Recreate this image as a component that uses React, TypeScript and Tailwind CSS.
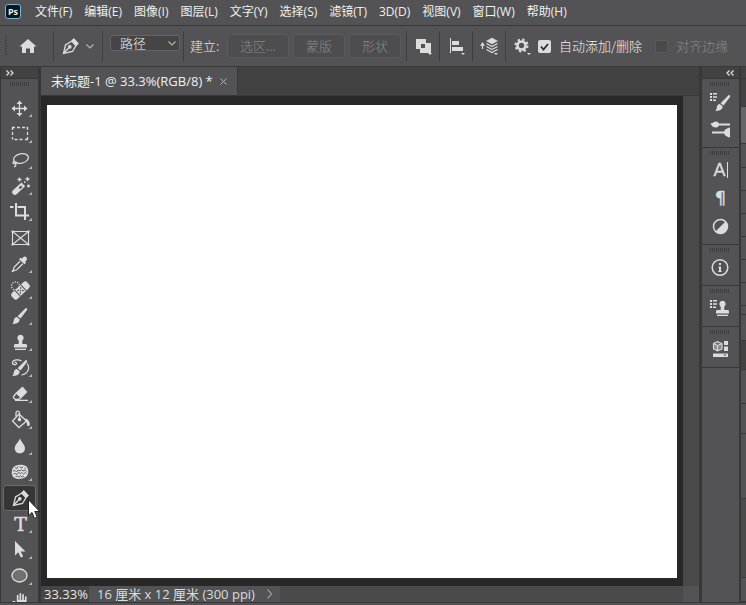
import type { ReactNode } from 'react'

const menus = [
    '文件(F)', '编辑(E)', '图像(I)', '图层(L)', '文字(Y)', '选择(S)',
    '滤镜(T)', '3D(D)', '视图(V)', '窗口(W)', '帮助(H)',
]

const Icon = ({ children }: { children: ReactNode }) => (
    <svg
        viewBox="0 0 24 24"
        className="block size-6 shrink-0"
        fill="none"
        stroke="#dcdcdc"
        strokeWidth="1.3"
        aria-hidden="true"
    >
        {children}
    </svg>
)

const Flyout = () => <path d="M24 18v3h-3.500z" fill="#b4b4b4" stroke="none" />

const BrushShape = () => (
    <g fill="#dcdcdc" stroke="none">
        <path d="M18.600 4.200c.8.500.7 1.200.2 2l-6.200 8.400-3-2.400 7.200-7.300c.7-.7 1.200-1 1.800-.7z" />
        <path d="M8.800 13l2.800 2.300c.2 3.200-3 5-7.600 4.500 1.600-.7 1.500-1.900 1.800-3.500.3-1.900 1.400-3.100 3-3.300z" />
    </g>
)

const StampShape = () => (
    <g fill="#dcdcdc" stroke="none">
        <path d="M12.500 4.800a3.200 3.200 0 0 1 2.200 5.500c-.6.700-.7 2.500-.2 3.700h3c1.100 0 1.500.6 1.500 1.500V17.500H6v-2c0-.9.500-1.500 1.500-1.500h3c.5-1.200.4-3-.2-3.700a3.200 3.200 0 0 1 2.200-5.500z" />
        <path d="M7 18.700h11V20H7z" />
    </g>
)

const PenShape = () => (
    <>
        <path d="M5.500 19.500l2-8.500 6.500-4 4 4.500-3.500 6z" />
        <path d="M14 7l1.800-2 4.200 4.400-2 2z" fill="#dcdcdc" />
        <path d="M5.500 19.500l6-6.500" />
        <circle cx="11.800" cy="12.800" r="1.200" fill="#dcdcdc" />
    </>
)

const ListDots = () => (
    <g fill="#dcdcdc" stroke="none">
        <path d="M2 4h2v2H2zM5 4h4v1.500H5zM2 7h2v2H2zM5 7.300h4v1.400H5zM2 10h2v2H2zM5 10.500h3V12H5z" />
    </g>
)

const tools: { name: string; icon: ReactNode; flyout?: boolean }[] = [
    {
        name: '移动工具',
        icon: (
            <>
                <path d="M11.500 7v11M6 12.500h11" />
                <path d="M11.500 4.500l3 3.500h-6zM11.500 20.500l3-3.500h-6zM3.500 12.500l3.500-3v6zM19.500 12.500l-3.500-3v6z" fill="#dcdcdc" stroke="none" />
            </>
        ),
    },
    {
        name: '矩形选框工具',
        icon: <path d="M4.500 8V5.500H7M9 5.500h3M14 5.500h3M18.500 5.500h1V8M19.500 10v3M19.500 15v2.500H17M14.500 17.500h-3M9.500 17.500h-3M4.500 17.500V15M4.500 13v-3" />,
    },
    {
        name: '套索工具',
        icon: (
            <>
                <ellipse cx="13" cy="10.500" rx="7.500" ry="4.700" transform="rotate(-12 13 10.500)" />
                <path d="M6.500 13.500c-2 .3-2 2.300 0 2.200 2-.1 2.500-1.500 1-2.200M7 15.500c1.500 1 1 2.500-1 3.500" />
            </>
        ),
    },
    {
        name: '魔棒工具',
        icon: (
            <>
                <path d="M13.500 9.500l2.700 2.700-8 7.600c-1 .9-2.400.5-3-.2-.7-.8-.8-1.800.2-2.800z" fill="#dcdcdc" />
                <path d="M13 11.500l1.500 1.500-2.500 2.300-1.300-1.500z" fill="#535355" stroke="none" />
                <path d="M11.500 3.500v4M9.500 5.500h4M19.500 3v4M17.500 5h4M20.500 10.500v3M19 12h3M16 8h1.500" />
            </>
        ),
    },
    {
        name: '裁剪工具',
        icon: <path d="M8 3v12.500h13M2 7h3.500M9.500 7H17v13" strokeWidth="2" />,
    },
    {
        name: '图框工具',
        flyout: false,
        icon: (
            <>
                <path d="M4.500 5.500h16v13h-16zM4.500 5.500l16 13M20.500 5.500l-16 13" strokeWidth="1.100" />
                <path d="M3.500 4.500h2v2h-2zM19.500 4.500h2v2h-2zM3.500 17.500h2v2h-2zM19.500 17.500h2v2h-2z" fill="#dcdcdc" stroke="none" />
            </>
        ),
    },
    {
        name: '吸管工具',
        icon: (
            <>
                <path d="M13.500 6.800c1.500-1.700 3-3 4.500-1.800 1.700 1.300 1 3-.7 4.700l.7 1-1.500 1.600-5.500-5 1.300-1.500z" fill="#dcdcdc" stroke="none" />
                <path d="M12 9.200l-6 6-.5 2.500-1.500 2 2.500-1.200 2.300-.7 6-6" />
            </>
        ),
    },
    {
        name: '污点修复画笔工具',
        icon: (
            <>
                <circle cx="7.500" cy="8" r="4" strokeDasharray="1.200 1.300" />
                <g transform="rotate(-43 12.500 12.500)">
                    <rect x="2" y="8.500" width="21" height="8" rx="2.500" fill="#dcdcdc" stroke="none" />
                    <path d="M8.500 8.500v8M16.500 8.500v8" stroke="#535355" strokeWidth="1" />
                    <path d="M10 10h1.500v1.500H10zM13.500 10H15v1.500h-1.500zM11.800 11.800h1.500v1.500h-1.500zM10 13.500h1.500V15H10zM13.500 13.500H15V15h-1.500z" fill="#535355" stroke="none" />
                </g>
            </>
        ),
    },
    { name: '画笔工具', icon: <BrushShape /> },
    { name: '仿制图章工具', icon: <StampShape /> },
    {
        name: '历史记录画笔工具',
        icon: (
            <>
                <BrushShape />
                <path d="M13.500 5c-3-2-8.500-1.500-9 1.500-.3 2.500 4 3 4 .7 0-1-1.500-1.200-1.800-.3M19 7.500c3.500 4.500 1 10.500-5.500 11.500" strokeWidth="1.200" />
            </>
        ),
    },
    {
        name: '橡皮擦工具',
        icon: (
            <>
                <path d="M14.500 5.500l4 4.500-5.500 5.500-4.500-4.500z" fill="#dcdcdc" />
                <path d="M8.500 11l-3 3.500c-.6.700 1 3 2.500 3h2.500l2.500-2M7 18.300h13" />
            </>
        ),
    },
    {
        name: '油漆桶工具',
        icon: (
            <>
                <path d="M11 6l7.500 7-7.500 6.500-6.500-6.500L11 6z" />
                <path d="M11.500 11V5c0-2.300-3.500-2.500-3.500 0v3.500" />
                <circle cx="11.500" cy="11.500" r="1.200" fill="#dcdcdc" />
                <path d="M16.500 10.500c3 .3 5.500 2.500 5.300 6 0 2-2.800 2-2.800 0 0-2-.8-3-2-4z" fill="#dcdcdc" stroke="none" />
            </>
        ),
    },
    {
        name: '模糊工具',
        icon: <path d="M12 4c.5 3.500 5 6.500 5 10.300 0 3-2.200 5-5.100 5s-5.200-2-5.200-5C6.700 10.500 11.500 7.500 12 4z" fill="#dcdcdc" stroke="none" />,
    },
    {
        name: '海绵工具',
        icon: (
            <>
                <path d="M8 5.500c3-1.200 8-1 10.500 1 2.500 2.300 2.300 8 0 10-2.300 2-7.500 3.300-10.500 2-3.500-1-4.500-4-4.200-6.800C4 8.500 5.500 6.500 8 5.500z" fill="#dcdcdc" stroke="none" />
                <path d="M7 7.500l2 1 1-2M12 6.500l1 1.500 2-1M16.500 8l1.500 1M5 11l2-.5 1.500 1.500 1.500-2 2 1 1.500-1.500 1.500 1.500 2-1 1.500 1.500M5.500 14l2-.5 1.500 1 1.500-2 2 1 1-1 2 1.500 2-1.500 1 1M7.500 16.500l2-.5 1.500 1.500 1.500-2 1.500 1.500 2-1" stroke="#59595b" strokeWidth=".9" />
            </>
        ),
    },
    { name: '钢笔工具', flyout: false, icon: <PenShape /> },
    {
        name: '横排文字工具',
        icon: (
            <text x="12.500" y="19" textAnchor="middle" fill="#dcdcdc" stroke="#dcdcdc" strokeWidth=".5" className="font-['DejaVu_Serif',serif] text-[19px]">
                T
            </text>
        ),
    },
    {
        name: '路径选择工具',
        icon: <path d="M7 3v14.500l3.300-3.200 2.500 5.300 2.400-1.200-2.500-5h4.800z" fill="#dcdcdc" stroke="none" />,
    },
    {
        name: '椭圆工具',
        icon: <ellipse cx="11.500" cy="11.500" rx="7.500" ry="6.500" fill="#707070" />,
    },
    {
        name: '抓手工具',
        flyout: false,
        icon: <path d="M8.800 5.500a.8.800 0 0 1 1.700 0V10h1V3.800a.8.800 0 0 1 1.700 0V10h1V4.800a.8.800 0 0 1 1.700 0V10h1V7a.8.800 0 0 1 1.700 0v8c0 3-2 5-5 5-4 0-6-3-9.100-8.500.6-1.500 2.500-.5 4.300 1.500z" fill="#dcdcdc" stroke="none" />,
    },
]

const panels: { name: string; icon: ReactNode }[][] = [
    [
        {
            name: '画笔设置',
            icon: (
                <>
                    <ListDots />
                    <g transform="translate(3 2)"><BrushShape /></g>
                </>
            ),
        },
        {
            name: '画笔',
            icon: (
                <>
                    <path d="M10 7.500h12M4 15.500h12" strokeWidth="2" />
                    <path d="M2.500 6c2 1 3-1.500 5.500-1.500 2 0 3 1.500 3 3s-1 3-3 3c-3 0-5-2-5.500-4.500zM22 10.500v10c-3.500-.5-6-2.500-6-5s2.500-4.500 6-5z" fill="#dcdcdc" stroke="none" />
                </>
            ),
        },
    ],
    [
        {
            name: '字符',
            icon: (
                <>
                    <text x="11.500" y="18" textAnchor="middle" fill="#dcdcdc" stroke="#dcdcdc" strokeWidth=".3" className="font-['Liberation_Sans',sans-serif] text-[18px]">A</text>
                    <path d="M19.500 4v16" strokeWidth="1" />
                </>
            ),
        },
        {
            name: '段落',
            icon: (
                <text x="12.500" y="18" textAnchor="middle" fill="#dcdcdc" stroke="#dcdcdc" strokeWidth=".3" className="font-['DejaVu_Sans',sans-serif] text-[18px]">¶</text>
            ),
        },
        {
            name: '调整',
            icon: (
                <>
                    <circle cx="12.500" cy="12.500" r="7" strokeWidth="1.500" />
                    <path d="M17.500 7.500a7 7 0 0 1-10 10z" fill="#dcdcdc" stroke="none" />
                </>
            ),
        },
    ],
    [
        {
            name: '信息',
            icon: (
                <>
                    <circle cx="12" cy="12.500" r="7.800" strokeWidth="1.500" />
                    <path d="M11 8h2v2h-2zM10.500 11.500H13v5h-2v-3.800h-.5zM10.300 16h3.400v1h-3.400z" fill="#dcdcdc" stroke="none" />
                </>
            ),
        },
    ],
    [
        {
            name: '仿制源',
            icon: (
                <>
                    <ListDots />
                    <g transform="translate(2)"><StampShape /></g>
                </>
            ),
        },
    ],
    [
        {
            name: '库',
            icon: (
                <>
                    <path d="M5.500 6.500l4-2 4.500 2v5.500l-4.500 2-4-2zM5.500 6.500l4 2 4.500-2M9.500 8.500V14" fill="#8a8a8a" strokeWidth="1.100" />
                    <path d="M16 4h4v4h-4zM16 9.500h4V14h-4zM5 16.500h15V20H5z" fill="#dcdcdc" stroke="none" />
                    <path d="M15.500 17.500h3L17 19z" fill="#444" stroke="none" />
                </>
            ),
        },
    ],
]

// sliver of the next panel column at the right edge
const slices = [
    'h-[28px] bg-[#424242]',
    'h-[37px] bg-[#666668]',
    'h-[24px] bg-[#535355]',
    'h-[23px] bg-[#535355]',
    'h-[23px] bg-[#535355]',
    'h-[23px] bg-[#535355]',
    'h-[23px] bg-[#535355]',
    'h-[23px] bg-[#535355]',
    'h-[23px] bg-[#535355]',
    'h-[9px] bg-[#535355]',
    'h-[26px] bg-[#535355]',
    'h-[29px] bg-[#424242]',
    'h-[34px] bg-[#535355]',
    'h-[30px] bg-[#535355]',
    'h-[65px] bg-[#535355]',
    'h-[79px] bg-[#4a4a4a]',
    'flex-1 bg-[#535355]',
]

const Grip = () => (
    <div className="h-1 w-5 bg-[repeating-linear-gradient(90deg,#3e3e3e_0_1px,transparent_1px_2px)]" />
)

const Divider = () => <div className="h-[30px] w-px shrink-0 bg-[#3e3e3e]" />

const MakeButton = ({ children, className }: { children: ReactNode; className: string }) => (
    <button
        disabled
        className={`h-6 shrink-0 rounded-[3px] border border-[#5b5b5d] bg-[#4d4d4f] text-[#88888a] ${className}`}
    >
        {children}
    </button>
)

const OptionsBar = () => (
    <div className="flex h-[41px] shrink-0 items-center border-b border-[#383838] font-['Noto_Sans_CJK_SC',sans-serif] text-[13px] font-light leading-4 whitespace-nowrap">
        <div className="flex w-[53px] shrink-0 items-center pl-[5px]">
            <div className="h-5 w-0.5 bg-[repeating-linear-gradient(#3e3e3e_0_1px,transparent_1px_2px)]" />
            <button aria-label="主页" className="ml-[9px]">
                <Icon>
                    <path d="M12 5l8.500 7.500H18V19h-4v-4.500h-4V19H6v-6.500H3.500z" fill="#dcdcdc" stroke="none" />
                </Icon>
            </button>
        </div>
        <Divider />
        <button aria-label="钢笔工具预设" className="flex w-12 shrink-0 items-center pl-1">
            <Icon><PenShape /></Icon>
            <svg viewBox="0 0 8 5" className="ml-1 h-[5px] w-2" fill="none" stroke="#b4b4b4" strokeWidth="1.200">
                <path d="M.5.500L4 4 7.500.500" />
            </svg>
        </button>
        <Divider />
        <div className="grid w-20 shrink-0 items-center justify-start pb-1.5 pl-[7px]">
            <select
                aria-label="工具模式"
                defaultValue="path"
                className="col-start-1 row-start-1 h-4 w-[70px] appearance-none rounded-[3px] border border-[#646466] bg-[#454545] pl-[9px] leading-[14px] text-[#f0f0f0]"
            >
                <option value="path">路径</option>
                <option value="shape">形状</option>
            </select>
            <svg viewBox="0 0 8 5" className="pointer-events-none col-start-1 row-start-1 mr-1 h-[5px] w-2 justify-self-end" fill="none" stroke="#b4b4b4" strokeWidth="1.200">
                <path d="M.5.500L4 4 7.500.500" />
            </svg>
        </div>
        <Divider />
        <div className="flex w-[222px] shrink-0 items-center gap-1 pl-1.5">
            <span className="w-[33px] text-[#e6e6e6]">建立:</span>
            <MakeButton className="w-[62px]">选区...</MakeButton>
            <MakeButton className="w-[52px]">蒙版</MakeButton>
            <MakeButton className="w-[52px]">形状</MakeButton>
        </div>
        <Divider />
        <button aria-label="路径操作" className="w-8 shrink-0 pl-1">
            <Icon>
                <path d="M5 5h10v4h5v10H9v-4H5zM10 10v4h4v-4z" fill="#dcdcdc" fillRule="evenodd" stroke="none" />
                <path d="M17 19h4l-2 2z" fill="#dcdcdc" stroke="none" />
            </Icon>
        </button>
        <Divider />
        <button aria-label="路径对齐方式" className="w-8 shrink-0 pl-1">
            <Icon>
                <path d="M6 4h1v15H6zM8 7h7v4H8zM8 13h11v4H8zM17 19h4l-2 2z" fill="#dcdcdc" stroke="none" />
            </Icon>
        </button>
        <Divider />
        <button aria-label="路径排列方式" className="w-8 shrink-0 pl-1">
            <Icon>
                <path d="M5.500 9v6" strokeWidth="1.200" />
                <path d="M3.500 11.500l2-3 2 3zM9.500 7l5.500-3 5.500 3-5.500 3z" fill="#dcdcdc" strokeWidth=".5" />
                <path d="M9.500 9.500l5.500 3 5.500-3M9.500 12.500l5.500 3 5.500-3M9.500 15.500l5.500 3 5.500-3" strokeWidth="1.200" />
                <path d="M17 19h4l-2 2z" fill="#dcdcdc" stroke="none" />
            </Icon>
        </button>
        <Divider />
        <button aria-label="其他钢笔选项" className="ml-1 shrink-0">
            <Icon>
                <circle cx="11.500" cy="11.500" r="4" strokeWidth="2.600" />
                <circle cx="11.500" cy="11.500" r="6" strokeWidth="2" strokeDasharray="2.356 2.356" />
                <path d="M17 19h4l-2 2z" fill="#dcdcdc" stroke="none" />
            </Icon>
        </button>
        <label className="ml-1 flex shrink-0 items-center gap-2 text-[#f0f0f0]">
            <span className="grid place-items-center">
                <input type="checkbox" defaultChecked className="peer col-start-1 row-start-1 size-[13px] appearance-none rounded-[2px] bg-[#777] checked:bg-[#dcdcdc]" />
                <svg viewBox="0 0 13 13" className="pointer-events-none invisible col-start-1 row-start-1 size-[13px] peer-checked:visible" fill="none" stroke="#303030" strokeWidth="1.800">
                    <path d="M3 6.500l2.500 3L10 4" />
                </svg>
            </span>
            自动添加/删除
        </label>
        <label className="ml-[13px] flex shrink-0 items-center gap-2 text-[#88888a]">
            <input type="checkbox" disabled className="size-[13px] appearance-none rounded-[2px] border border-[#5b5b5d] bg-[#4a4a4b]" />
            对齐边缘
        </label>
    </div>
)

const Toolbar = () => (
    <aside className="flex w-10 shrink-0 flex-col overflow-hidden border-r-2 border-l border-[#383838]">
        <button aria-label="展开工具栏" className="flex h-3 shrink-0 items-center border-b border-[#383838] bg-[#424242] pl-[5px]">
            <svg viewBox="0 0 8 6" className="h-1.5 w-2" fill="none" stroke="#dcdcdc" strokeWidth="1.300">
                <path d="M.5.500L3 3 .5 5.500M4.500.500L7 3 4.500 5.500" />
            </svg>
        </button>
        <div className="flex h-4 shrink-0 justify-center pt-[3px]">
            <Grip />
        </div>
        {tools.map((tool) => (
            <button
                key={tool.name}
                aria-label={tool.name}
                className={`ml-[2px] flex h-[26px] w-[33px] shrink-0 items-center justify-center rounded-[3px] border ${tool.name === '钢笔工具' ? 'border-[#6a6a6a] bg-[#363636]' : 'border-transparent'}`}
            >
                <Icon>
                    {tool.icon}
                    {tool.flyout !== false && <Flyout />}
                </Icon>
            </button>
        ))}
    </aside>
)

const Document = () => (
    <main className="flex min-w-0 flex-1 flex-col border-l border-[#383838]">
        <div className="flex h-[29px] shrink-0 border-b border-[#383838] bg-[#424242]">
            <div className="flex items-center gap-[7px] border-r border-[#383838] bg-[#535355] pr-[10px] pl-[10px] text-[13px] leading-4 whitespace-nowrap text-[#f0f0f0]">
                未标题-1 @ 33.3%(RGB/8) *
                <button aria-label="关闭">
                    <svg viewBox="0 0 7 7" className="block size-[7px]" stroke="#b4b4b4">
                        <path d="M.5.500l6 6M6.500.500l-6 6" />
                    </svg>
                </button>
            </div>
        </div>
        <div className="flex min-h-0 flex-1">
            <div className="flex flex-1 bg-[#282828] px-1.5 pt-[9px] pb-2">
                <div className="flex-1 bg-white" />
            </div>
            <div className="w-4 shrink-0 bg-[#4a4a4a]" />
        </div>
        <div className="flex h-4 shrink-0 text-[13px] leading-4 whitespace-nowrap text-[#e6e6e6]">
            <div className="w-12 shrink-0 bg-[#454545] pl-[3px]">33.33%</div>
            <div className="flex flex-1 items-center bg-[#4a4a4a]">
                <div className="flex h-4 items-center gap-3 bg-[#535355] px-2 text-[#dcdcdc]">
                    16 厘米 x 12 厘米 (300 ppi)
                    <svg viewBox="0 0 5 10" className="h-2.5 w-[5px]" fill="none" stroke="#c8c8c8">
                        <path d="M.5.500L4.500 5 .5 9.500" />
                    </svg>
                </div>
            </div>
            <div className="w-4 shrink-0 bg-[#535355]" />
        </div>
    </main>
)

const Dock = () => (
    <aside className="flex w-[42px] shrink-0 flex-col overflow-hidden border-r-2 border-l-3 border-[#383838]">
        <button aria-label="展开面板" className="flex h-3 shrink-0 items-center justify-end border-b border-[#383838] bg-[#424242] pr-[5px]">
            <svg viewBox="0 0 8 6" className="h-1.5 w-2" fill="none" stroke="#dcdcdc" strokeWidth="1.300">
                <path d="M3.500.500L1 3l2.500 2.500M7.500.500L5 3l2.500 2.500" />
            </svg>
        </button>
        {panels.map((panel) => (
            <div key={panel[0].name} className="flex shrink-0 flex-col items-center border-b border-[#383838] pt-[3px] pr-px pb-1.5">
                <Grip />
                <div className="flex flex-col gap-1 pt-[3px]">
                    {panel.map((item) => (
                        <button key={item.name} aria-label={item.name}>
                            <Icon>{item.icon}</Icon>
                        </button>
                    ))}
                </div>
            </div>
        ))}
    </aside>
)

export default function App() {
    return (
        <div className="relative flex h-screen flex-col overflow-hidden bg-[#535355] font-['Open_Sans','Noto_Sans_CJK_SC',sans-serif] text-[#f0f0f0]">
            <nav className="flex h-[26px] shrink-0 items-center gap-3 border-b border-[#383838] pb-0.5 pl-[5px] text-[12px] leading-4 whitespace-nowrap">
                <div className="mr-0.5 flex h-[15px] w-4 items-center justify-center rounded-[3px] border border-[#78b4d8] bg-[#06171f] text-[9px] font-bold">
                    Ps
                </div>
                {menus.map((menu) => (
                    <button key={menu}>{menu}</button>
                ))}
            </nav>
            <OptionsBar />
            <div className="flex min-h-0 flex-1">
                <Toolbar />
                <Document />
                <Dock />
                <div className="flex w-[5px] shrink-0 flex-col">
                    <div className="h-3 shrink-0 border-b border-[#383838] bg-[#424242]" />
                    {slices.map((slice, i) => (
                        <div key={i} className={`border-b border-[#383838] ${slice}`} />
                    ))}
                </div>
            </div>
            <div className="h-[3px] shrink-0 border-t border-[#383838]" />
            <svg viewBox="0 0 12 20" className="pointer-events-none absolute top-[499px] left-7 h-5 w-3" fill="#fff" stroke="#222">
                <path d="M.5.800v16l3.500-3.300 2.500 5.900 2.800-1.200-2.500-5.700h4.900z" />
            </svg>
        </div>
    )
}
